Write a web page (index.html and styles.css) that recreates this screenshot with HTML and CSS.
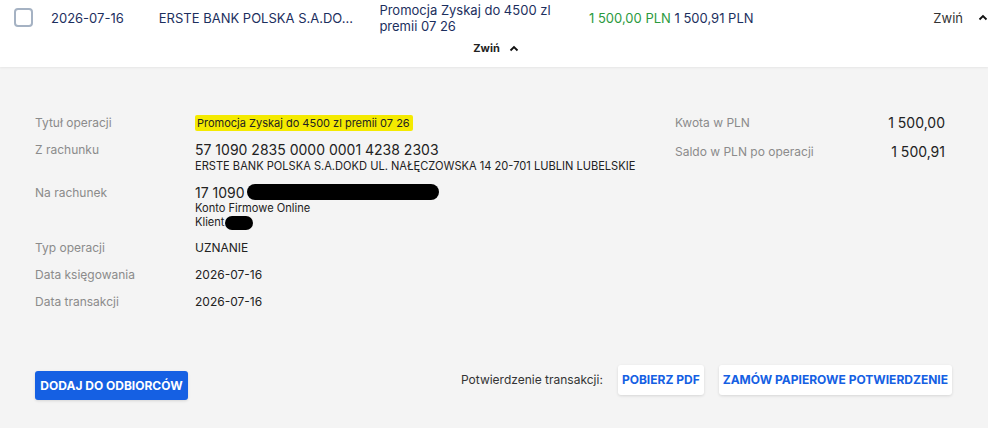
FILE: index.html
```html
<!DOCTYPE html>
<html lang="pl">
<head>
<meta charset="utf-8">
<link rel="stylesheet" href="styles.css">
</head>
<body>
<div class="top">
  <div class="row">
    <span class="check"></span>
    <span class="date">2026-07-16</span>
    <span class="name">ERSTE BANK POLSKA S.A.DO...</span>
    <span class="title">Promocja Zyskaj do 4500 zl<br>premii 07 26</span>
    <span class="amount"><span class="green">1 500,00 PLN</span> 1 500,91 PLN</span>
    <span class="collapse">Zwiń</span>
    <svg class="chev" width="10" height="7" viewBox="0 0 10 7"><path d="M1.5 5.5 L5 2 L8.5 5.5" fill="none" stroke="#111" stroke-width="1.8"/></svg>
  </div>
  <div class="toggle">Zwiń <svg width="10" height="7" viewBox="0 0 10 7"><path d="M1.5 5.5 L5 2 L8.5 5.5" fill="none" stroke="#111" stroke-width="1.8"/></svg></div>
</div>
<div class="detail">
  <div class="cols">
    <div class="left">
      <div class="item"><div class="lab">Tytuł operacji</div><div class="val"><span class="hl">Promocja Zyskaj do 4500 zl premii 07 26</span></div></div>
      <div class="item multi"><div class="lab">Z rachunku</div><div class="val"><div class="acc">57 1090 2835 0000 0001 4238 2303</div><div class="sub">ERSTE BANK POLSKA S.A.DOKD UL. NAŁĘCZOWSKA 14 20-701 LUBLIN LUBELSKIE</div></div></div>
      <div class="item"><div class="lab">Na rachunek</div><div class="val"><div class="acc acc2">17 1090<span class="blot b1"></span></div><div class="sub">Konto Firmowe Online</div><div class="sub">Klient<span class="blot b2"></span></div></div></div>
      <div class="item"><div class="lab">Typ operacji</div><div class="val">UZNANIE</div></div>
      <div class="item"><div class="lab">Data księgowania</div><div class="val">2026-07-16</div></div>
      <div class="item"><div class="lab">Data transakcji</div><div class="val">2026-07-16</div></div>
    </div>
    <div class="right">
      <div class="ritem"><span class="lab">Kwota w PLN</span><span class="rval">1 500,00</span></div>
      <div class="ritem"><span class="lab">Saldo w PLN po operacji</span><span class="rval">1 500,91</span></div>
    </div>
  </div>
  <div class="actions">
    <button class="primary">DODAJ DO ODBIORCÓW</button>
    <div class="confirm">
      <span class="clab">Potwierdzenie transakcji:</span>
      <button class="sec">POBIERZ PDF</button>
      <button class="sec">ZAMÓW PAPIEROWE POTWIERDZENIE</button>
    </div>
  </div>
</div>
</body>
</html>
```
FILE: styles.css
```css
* { box-sizing: border-box; }
html, body { margin: 0; padding: 0; }
body { font-family: Inter, "Noto Sans", sans-serif; background: #f4f4f4; width: 988px; height: 428px; overflow: hidden; color: #222; }
.top { background: #fff; height: 67px; box-shadow: 0 1px 2px rgba(0,0,0,0.06); }
.row { display: flex; align-items: center; height: 34px; padding-top: 1px; font-size: 13px; color: #1c2f5e; }
.check { width: 19px; height: 19px; border: 2px solid #a5b2c3; border-radius: 4px; margin-left: 14px; flex: none; }
.date { margin-left: 18px; width: 108px; }
.name { width: 221px; }
.title { width: 210px; line-height: 16px; }
.amount { width: 345px; padding-top: 1px; }
.green { color: #2b9a3e; }
.collapse { color: #333; }
.chev { margin-left: 15px; }
.toggle { font-size: 11px; font-weight: 700; color: #222; margin-top: 7px; padding-left: 4px; display: flex; justify-content: center; align-items: center; gap: 9px; }
.detail { padding: 46px 43px 0 35px; }
.cols { display: flex; justify-content: space-between; }
.left { display: flex; flex-direction: column; }
.item { display: flex; margin-bottom: 8px; font-size: 12px; }
.item.multi { margin-bottom: 10px; }
.item .lab { width: 160px; color: #8b8b8b; font-size: 12px; line-height: 19px; }
.val { color: #222; line-height: 19px; }
.hl { background: #f4ea00; padding: 1px 3px 1px 2px; border-radius: 2px; font-size: 11px; line-height: 14px; display: inline-block; }
.acc { font-size: 14px; line-height: 19px; }
.acc2 { height: 18px; }
.sub { font-size: 11.1px; line-height: 14px; }
.blot { display: inline-block; background: #000; border-radius: 999px; vertical-align: middle; }
.b1 { width: 192px; height: 16px; margin-left: 2px; margin-top: -4px; }
.b2 { width: 28px; height: 14px; margin-left: 1px; }
.right { width: 270px; display: flex; flex-direction: column; gap: 10px; }
.ritem { display: flex; justify-content: space-between; font-size: 12px; line-height: 19px; }
.ritem .lab { color: #8b8b8b; }
.rval { font-size: 14px; color: #222; }
.actions { display: flex; justify-content: space-between; align-items: flex-end; margin-top: 46px; }
button { font-family: Inter, "Noto Sans", sans-serif; font-weight: 700; font-size: 12px; border: none; border-radius: 3px; cursor: pointer; }
.primary { background: #1560e3; color: #fff; height: 29px; padding: 0 5px; width: 153px; box-shadow: 0 1px 3px rgba(0,0,0,0.12); }
.confirm { display: flex; align-items: center; gap: 15px; margin-bottom: 5px; margin-right: -7px; }
.clab { font-size: 12px; color: #333; margin-right: 0; }
.sec { background: #fff; color: #1560e3; height: 30px; padding: 0 4px; box-shadow: 0 1px 3px rgba(0,0,0,0.12); }
```
